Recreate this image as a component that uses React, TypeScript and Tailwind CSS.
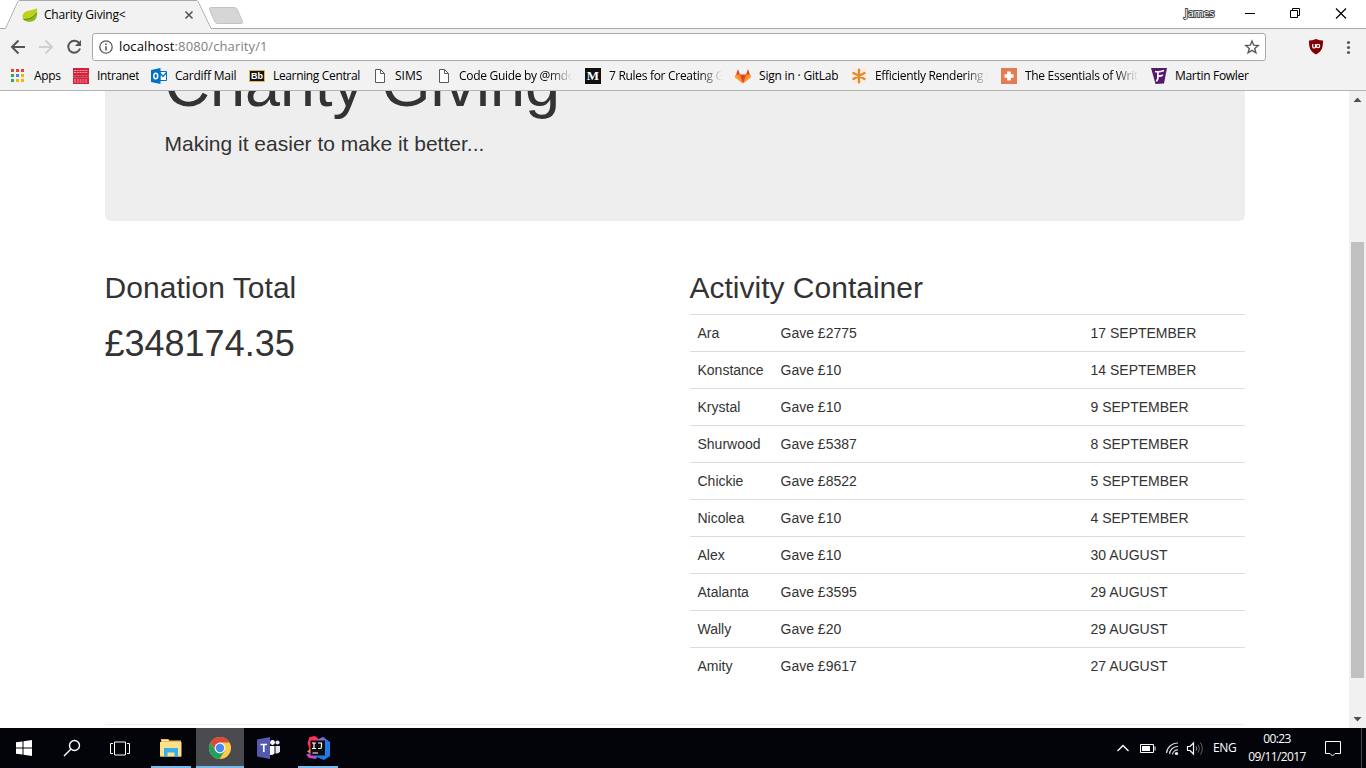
import React from "react";

const ui = "font-['Open_Sans','Noto_Sans',sans-serif]";

function Leaf() {
  return (
    <svg width="16" height="16" viewBox="0 0 16 16">
      <path d="M15 1C12 4 3 2.500 .8 7.500C-.5 11 2 14 5 14.500C10 15.500 16 13 15 1Z" fill="#c1cf1e" />
      <path d="M15.200 5C14.500 9 10 11.500 2 12.500C5 16 16 16.500 15.200 5Z" fill="#8dbb1e" />
      <path d="M1.500 12.500C7 12.500 12 10.500 14.300 6" stroke="#3f7a26" strokeWidth=".9" fill="none" />
    </svg>
  );
}

function FileIcon() {
  return (
    <svg width="16" height="16" viewBox="0 0 16 16" fill="none" stroke="#5a5a5a">
      <path d="M4.500 1.500H9.500L13.500 5.500V14.500H4.500Z" fill="#fff" />
      <path d="M9.500 1.500V5.500H13.500" />
    </svg>
  );
}

function AppsIcon() {
  const c = ["#ea4335", "#ea4335", "#ea4335", "#34a853", "#4285f4", "#f4b400", "#34a853", "#f4b400", "#f4b400"];
  return (
    <svg width="16" height="16" viewBox="0 0 16 16" shapeRendering="crispEdges">
      {c.map((f, i) => (
        <rect key={i} x={1 + (i % 3) * 5} y={1 + Math.floor(i / 3) * 5} width="3" height="3" fill={f} />
      ))}
    </svg>
  );
}

function CardiffIcon() {
  return (
    <svg width="16" height="16" viewBox="0 0 16 16">
      <rect width="16" height="16" fill="#d3203b" />
      <path d="M0 7.500H16M0 9.500H16" stroke="#e0667a" strokeWidth=".7" />
      <path d="M1 2.500H15M1 4.500H15M1 12H15M1 14H15" stroke="#eaa0ac" strokeDasharray="2 .8" />
    </svg>
  );
}

function OutlookIcon() {
  return (
    <svg width="16" height="16" viewBox="0 0 16 16">
      <path d="M9 3.500H15.500V12.500H9Z" fill="#fff" stroke="#0072c6" />
      <path d="M9 5L12 8.500L15.500 4.500" fill="none" stroke="#0072c6" strokeWidth="1.300" />
      <path d="M0 2L9.500 0V16L0 14Z" fill="#0072c6" />
      <ellipse cx="4.700" cy="8" rx="2" ry="2.700" fill="none" stroke="#fff" strokeWidth="1.500" />
    </svg>
  );
}

function BbIcon() {
  return (
    <span className="flex h-4 w-4 items-center">
      <span className="flex h-3 w-4 items-center justify-center border border-[#d9b84c] bg-[#151515] font-['Liberation_Sans',sans-serif] text-[9px] leading-[10px] font-bold text-white">
        Bb
      </span>
    </span>
  );
}

function MediumIcon() {
  return (
    <span className="flex h-4 w-4 items-center justify-center bg-[#111] font-['Liberation_Serif',serif] text-[13px] leading-4 font-bold text-white">
      M
    </span>
  );
}

function GitlabIcon() {
  return (
    <svg width="16" height="16" viewBox="0 0 16 16">
      <path d="M3 1L5 6.500H11L13 1L15.800 9.200L8 15.200L.2 9.200Z" fill="#e24329" />
      <path d="M.9 6.500H5L8 15.200L.2 9.200Z" fill="#fc8a26" />
      <path d="M15.100 6.500H11L8 15.200L15.800 9.200Z" fill="#fc8a26" />
      <path d="M.9 6.500L8 15.200L.2 9.200Z" fill="#fca326" />
      <path d="M15.100 6.500L8 15.200L15.800 9.200Z" fill="#fca326" />
    </svg>
  );
}

function StarburstIcon() {
  return (
    <svg width="16" height="16" viewBox="0 0 16 16">
      <rect width="16" height="16" fill="#f9eee2" />
      <path d="M8 1.800V14.200M2.500 5L13.500 11M13.500 5L2.500 11" stroke="#e28a2b" strokeWidth="2.400" strokeLinecap="round" />
    </svg>
  );
}

function PlusIcon() {
  return (
    <svg width="16" height="16" viewBox="0 0 16 16">
      <rect width="16" height="16" fill="#e37d51" />
      <path d="M8 3.500V12.500M3.500 8H12.500" stroke="#fff" strokeWidth="3.600" />
    </svg>
  );
}

function FowlerIcon() {
  return (
    <svg width="16" height="16" viewBox="0 0 16 16">
      <path d="M0 0H16L13 15.500L4.500 16Z" fill="#56196b" />
      <path d="M4 3.500Q8 4.500 13 2.500M7 3.800L6.800 11.500M6.800 8Q9.500 8.500 11.800 7M6.800 10.500L5.500 13.500" stroke="#fff" strokeWidth="1.700" fill="none" />
    </svg>
  );
}

const bookmarks = [
  { label: "Apps", icon: <AppsIcon />, box: "w-[63px]", text: "tracking-[-0.3px]" },
  { label: "Intranet", icon: <CardiffIcon />, box: "w-[78px]", text: "tracking-[-0.35px]" },
  { label: "Cardiff Mail", icon: <OutlookIcon />, box: "w-[98px]", text: "tracking-[-0.25px]" },
  { label: "Learning Central", icon: <BbIcon />, box: "w-[122px]", text: "tracking-[-0.35px]" },
  { label: "SIMS", icon: <FileIcon />, box: "w-[64px]", text: "tracking-[0px]" },
  { label: "Code Guide by @mdo", icon: <FileIcon />, box: "w-[150px]", text: "tracking-[-0.3px]", fade: true },
  { label: "7 Rules for Creating G", icon: <MediumIcon />, box: "w-[150px]", text: "tracking-[-0.3px]", fade: true },
  { label: "Sign in · GitLab", icon: <GitlabIcon />, box: "w-[116px]", text: "tracking-[-0.2px]" },
  { label: "Efficiently Rendering (", icon: <StarburstIcon />, box: "w-[150px]", text: "tracking-[-0.3px]", fade: true },
  { label: "The Essentials of Writ", icon: <PlusIcon />, box: "w-[150px]", text: "tracking-[-0.3px]", fade: true },
  { label: "Martin Fowler", icon: <FowlerIcon />, box: "w-[110px]", text: "tracking-[-0.3px]" },
];

function TabStrip() {
  return (
    <div className="relative flex h-[29px] shrink-0 bg-white">
      <svg className="absolute inset-0" width="1366" height="29">
        <path d="M0 28.500H5.500L18 1.500Q18.500 .5 20 .5H196Q197.500 .5 198 1.500L211 28.500H1366" fill="none" stroke="#a9a9a9" />
        <path d="M6 29L18.500 2Q19 1 20 1H196Q197 1 197.500 2L210.500 29Z" fill="#f2f2f2" />
        <path d="M210.500 7.500H234Q236 7.500 237 9L242.500 21.500Q243 23.500 241 23.500H218Q216 23.500 215 22L209.500 9.500Q209 7.500 210.500 7.500Z" fill="#d6d6d6" stroke="#c3c3c3" />
      </svg>
      <div className="relative flex h-[29px] w-[212px] items-center pl-[22px]">
        <Leaf />
        <span className="ml-[6px] w-[140px] text-xs tracking-[-0.2px] whitespace-pre text-black">Charity Giving&lt;</span>
        <svg width="10" height="10" viewBox="0 0 10 10" stroke="#555" strokeWidth="1.600">
          <path d="M1.500 1.500L8.500 8.500M8.500 1.500L1.500 8.500" />
        </svg>
      </div>
      <div className="relative ml-auto flex items-center pb-[2px]">
        <span className="mr-[28px] w-[32px] text-[11px] tracking-[-0.3px] text-white [-webkit-text-stroke:2px_#4a4a4a] [paint-order:stroke_fill]">James</span>
        <svg width="121" height="27" viewBox="0 0 121 27" fill="none" stroke="#000">
          <path d="M0 13.500H10" />
          <path d="M45.500 10.500H52.500V17.500H45.500ZM47.500 10.500V8.500H54.500V15.500H52.500" />
          <path d="M91 8.500L101 18.500M101 8.500L91 18.500" strokeWidth="1.200" />
        </svg>
      </div>
    </div>
  );
}

function Toolbar() {
  return (
    <div className="flex h-8 shrink-0 items-start bg-[#f2f2f2]">
      <svg className="shrink-0" width="92" height="32" viewBox="0 0 92 32" fill="none" strokeWidth="2">
        <path d="M25 18H12.500M18.500 11.500L12 18L18.500 24.500" stroke="#555" />
        <path d="M39 18H51.500M45.500 11.500L52 18L45.500 24.500" stroke="#d0d0d0" />
        <path d="M79.200 14.200A6 6 0 1 0 80 19.500" stroke="#555" />
        <path d="M81 11V17H75Z" fill="#555" />
      </svg>
      <div className="mt-[4px] flex h-7 w-[1174px] shrink-0 items-center rounded-[3px] border border-[#a9a9a9] bg-white pr-[5px] pl-[6px]">
        <svg width="14" height="14" viewBox="0 0 14 14" fill="none" stroke="#5a5a5a">
          <circle cx="7" cy="7" r="6.200" strokeWidth="1.300" />
          <path d="M7 6.200V10.500M7 3.500V5" strokeWidth="1.600" />
        </svg>
        <span className="ml-[6px] text-[13px] tracking-[0.12px] text-black">
          localhost<span className="text-[#808080]">:8080/charity/1</span>
        </span>
        <svg className="ml-auto" width="16" height="16" viewBox="0 0 16 16" fill="none" stroke="#5a5a5a" strokeWidth="1.400">
          <path d="M8 2L9.700 6.200L14.200 6.500L10.700 9.400L11.900 13.800L8 11.400L4.100 13.800L5.300 9.400L1.800 6.500L6.300 6.200Z" />
        </svg>
      </div>
      <svg width="100" height="32" viewBox="0 0 100 32">
        <path d="M50 10Q46 11.500 43 11.500C43 19 44 22 50 25.500C56 22 57 19 57 11.500Q54 11.500 50 10Z" fill="#800000" />
        <path d="M46.800 15V18Q46.800 19 48 19T49.500 18V15" fill="none" stroke="#fff" strokeWidth="1.200" />
        <circle cx="52" cy="17" r="1.700" fill="none" stroke="#fff" strokeWidth="1.200" />
        <g fill="#5a5a5a"><circle cx="82.500" cy="13.500" r="1.600" /><circle cx="82.500" cy="18.500" r="1.600" /><circle cx="82.500" cy="23.500" r="1.600" /></g>
      </svg>
    </div>
  );
}

function BookmarkBar() {
  return (
    <div className="flex h-[30px] shrink-0 items-center border-b border-[#b4b4b4] bg-[#f2f2f2] pl-[10px]">
      {bookmarks.map((b) => (
        <div key={b.label} className={`flex shrink-0 items-center gap-2 ${b.box}`}>
          <span className="shrink-0">{b.icon}</span>
          <span
            className={`overflow-hidden text-xs whitespace-nowrap text-black ${b.text} ${
              b.fade ? "w-[113px] [mask-image:linear-gradient(to_right,#000_80%,transparent)]" : ""
            }`}
          >
            {b.label}
          </span>
        </div>
      ))}
    </div>
  );
}

const rows = [
  ["Ara", "Gave £2775", "17 SEPTEMBER"],
  ["Konstance", "Gave £10", "14 SEPTEMBER"],
  ["Krystal", "Gave £10", "9 SEPTEMBER"],
  ["Shurwood", "Gave £5387", "8 SEPTEMBER"],
  ["Chickie", "Gave £8522", "5 SEPTEMBER"],
  ["Nicolea", "Gave £10", "4 SEPTEMBER"],
  ["Alex", "Gave £10", "30 AUGUST"],
  ["Atalanta", "Gave £3595", "29 AUGUST"],
  ["Wally", "Gave £20", "29 AUGUST"],
  ["Amity", "Gave £9617", "27 AUGUST"],
];

function Page() {
  return (
    <div className="min-w-0 flex-1 overflow-hidden bg-white px-[104.5px] font-['Liberation_Sans',Arial,sans-serif] text-[#333]">
      <div className="mt-[-90px] h-[219.6px] rounded-md bg-[#eee] px-[60px] pt-[49px]">
        <h1 className="mb-[10px] text-[63px] leading-[69.3px]">Charity Giving</h1>
        <p className="text-[21px] leading-[29.4px]">Making it easier to make it better...</p>
      </div>
      <div className="mt-[50px] flex gap-[30px]">
        <section className="w-[555px]">
          <h2 className="text-[30px] leading-[33px] tracking-[0.04px]">Donation Total</h2>
          <div className="mt-5 text-[36px] leading-[39.6px]">£348174.35</div>
        </section>
        <section className="w-[555px]">
          <h2 className="mb-[10px] text-[30px] leading-[33px]">Activity Container</h2>
          <table className="w-full table-fixed border-collapse text-sm">
            <colgroup>
              <col className="w-[83px]" />
              <col className="w-[310px]" />
              <col />
            </colgroup>
            <tbody>
              {rows.map((r) => (
                <tr key={r[0]} className="h-[37px] border-t border-[#ddd]">
                  {r.map((c) => (
                    <td key={c} className="p-2 leading-5">{c}</td>
                  ))}
                </tr>
              ))}
            </tbody>
          </table>
        </section>
      </div>
      <hr className="mt-10 border-[#eee]" />
    </div>
  );
}

function Scrollbar() {
  return (
    <div className="flex w-[17px] shrink-0 flex-col items-center bg-[#f1f1f1]">
      <svg width="17" height="17" viewBox="0 0 17 17"><path d="M4.500 11L8.500 6.500L12.500 11Z" fill="#505050" /></svg>
      <div className="mt-[134px] h-[436px] w-[13px] bg-[#c1c1c1]" />
      <svg className="mt-auto" width="17" height="17" viewBox="0 0 17 17"><path d="M4.500 6L8.500 10.500L12.500 6Z" fill="#505050" /></svg>
    </div>
  );
}

function Taskbar() {
  return (
    <div className="flex h-10 shrink-0 bg-[#020409] text-white">
      <div className="flex w-12 items-center justify-center">
        <svg width="16" height="16" viewBox="0 0 16 16" fill="#fff"><path d="M0 2.300L6.500 1.400V7.500H0ZM7.500 1.200L16 0V7.500H7.500ZM0 8.500H6.500V14.600L0 13.700ZM7.500 8.500H16V16L7.500 14.800Z" /></svg>
      </div>
      <div className="flex w-12 items-center justify-center">
        <svg width="18" height="18" viewBox="0 0 18 18" fill="none" stroke="#fff" strokeWidth="1.400"><circle cx="11.500" cy="6.500" r="5" /><path d="M8 10L1 17" /></svg>
      </div>
      <div className="flex w-12 items-center justify-center">
        <svg width="20" height="15" viewBox="0 0 20 15" fill="none" stroke="#fff"><path d="M4.500 1H15.500V14H4.500ZM3 2.500H.5V12.500H3M17 2.500H19.500V12.500H17" /></svg>
      </div>
      <div className="relative ml-[3px] flex w-[48px] items-center justify-center">
        <svg width="22" height="18" viewBox="0 0 22 18">
          <path d="M1 0H8.500L9.500 1.500H21V17.500H1Z" fill="#eebb4d" />
          <path d="M0 3H21.500V17.500H0Z" fill="#fce08c" />
          <path d="M2 1.500H8" stroke="#fff1b5" />
          <path d="M4 9H18V18H14.500V13.500H7.500V18H4Z" fill="#37aee8" />
        </svg>
        <div className="absolute bottom-0 left-1 h-[2px] w-10 bg-[#76b9ed]" />
      </div>
      <div className="relative ml-[1px] flex w-12 items-center justify-center bg-[#4a4b4e]">
        <svg width="22" height="22" viewBox="0 0 22 22">
          <circle cx="11" cy="11" r="11" fill="#ffcd43" />
          <path d="M1.500 5.500A11 11 0 0 1 20.600 5.600H11L6.300 13.700Z" fill="#db4939" />
          <path d="M1.500 5.500A11 11 0 0 0 10.500 22L15.700 13.700L11 16L6.300 13.700Z" fill="#1da261" />
          <circle cx="11" cy="11" r="5.400" fill="#f5f5f5" />
          <circle cx="11" cy="11" r="4.200" fill="#4a89f3" />
        </svg>
        <div className="absolute bottom-0 left-0 h-[2px] w-12 bg-[#76b9ed]" />
      </div>
      <div className="flex w-[49px] items-center justify-center">
        <svg width="23" height="22" viewBox="0 0 23 22">
          <circle cx="15.500" cy="5.500" r="2.400" fill="#fff" /><circle cx="20.500" cy="5.500" r="2.100" fill="#e4e4f6" />
          <path d="M12 9H17.500V16.500Q16 18.500 12 18Z" fill="#fff" /><path d="M18.500 9H23V14.500Q22 17 18.500 16.500Z" fill="#e4e4f6" />
          <path d="M0 2.500L13 0V22L0 19.500Z" fill="#5558af" />
          <path d="M3.500 7.500H10M6.800 7.500V15" stroke="#fff" strokeWidth="1.700" />
        </svg>
      </div>
      <div className="relative ml-px flex w-[48px] items-center justify-center">
        <svg width="24" height="24" viewBox="0 0 24 24">
          <path d="M1.500 7L3.500 1L9 0L15 5L9 18L4 15Z" fill="#fc315f" />
          <path d="M1 15.500L5 12V18Z" fill="#f58a3c" />
          <path d="M0 18.500L5 17L12 19L10 23L3 22Z" fill="#c548c9" />
          <path d="M11 4L17 1L24 6V20L18 24L8 20Z" fill="#1f7be8" />
          <path d="M11 4L17 1L20 3.500L17 8Z" fill="#8c62cf" />
          <rect x="4.500" y="4.500" width="14.500" height="15" fill="#100b0d" />
          <path d="M6 7H10M8 7V12M6 12.500H10M12 7H15.500V11Q15.500 12.500 14 12.500H12M6.500 17H12" stroke="#fff" strokeWidth="1.200" fill="none" />
        </svg>
        <div className="absolute bottom-0 left-1 h-[2px] w-10 bg-[#76b9ed]" />
      </div>
      <div className="ml-auto flex items-center">
        <svg width="90" height="40" viewBox="0 0 90 40" fill="none" stroke="#fff">
          <path d="M1.500 23L7 17.500L12.500 23" strokeWidth="1.400" />
          <path d="M24.500 16.500H37.500V24.500H24.500ZM39 18.500V22.500" />
          <path d="M26 18H34V23H26Z" fill="#fff" stroke="none" />
          <path d="M50.500 25A11 11 0 0 1 62 15M53.500 26A8 8 0 0 1 62 18.500M56.500 26.500A5 5 0 0 1 62 22" stroke="#d8d8d8" strokeWidth="1.200" />
          <circle cx="60.500" cy="25.500" r="1.600" fill="#fff" stroke="none" />
          <path d="M71.500 18.500H74L77.500 15V26L74 22.500H71.500Z" strokeWidth="1.200" />
          <path d="M80 18.500Q81.500 20.500 80 22.500" stroke="#aaa" /><path d="M82 16.500Q85 20.500 82 24.500M84.500 14.500Q88 20.500 84.500 26.500" stroke="#666" />
        </svg>
        <span className="ml-[7px] w-[30px] text-xs tracking-[-0.3px]">ENG</span>
        <div className="-ml-px flex w-[70px] flex-col items-center text-xs leading-[18px] tracking-[-0.6px] whitespace-nowrap">
          <span>00:23</span>
          <span>09/11/2017</span>
        </div>
        <svg className="ml-[12px]" width="18" height="18" viewBox="0 0 18 18" fill="none" stroke="#fff"><path d="M1.500 2.500H16.500V14.500H11L8.500 17L6 14.500H1.500Z" /></svg>
        <div className="ml-[19px] h-10 w-px bg-[#4a4b4e]" />
        <div className="w-1" />
      </div>
    </div>
  );
}

export default function App() {
  return (
    <div className={`flex h-[768px] w-[1366px] flex-col overflow-hidden ${ui}`}>
      <TabStrip />
      <Toolbar />
      <BookmarkBar />
      <div className="flex min-h-0 flex-1">
        <Page />
        <Scrollbar />
      </div>
      <Taskbar />
    </div>
  );
}
